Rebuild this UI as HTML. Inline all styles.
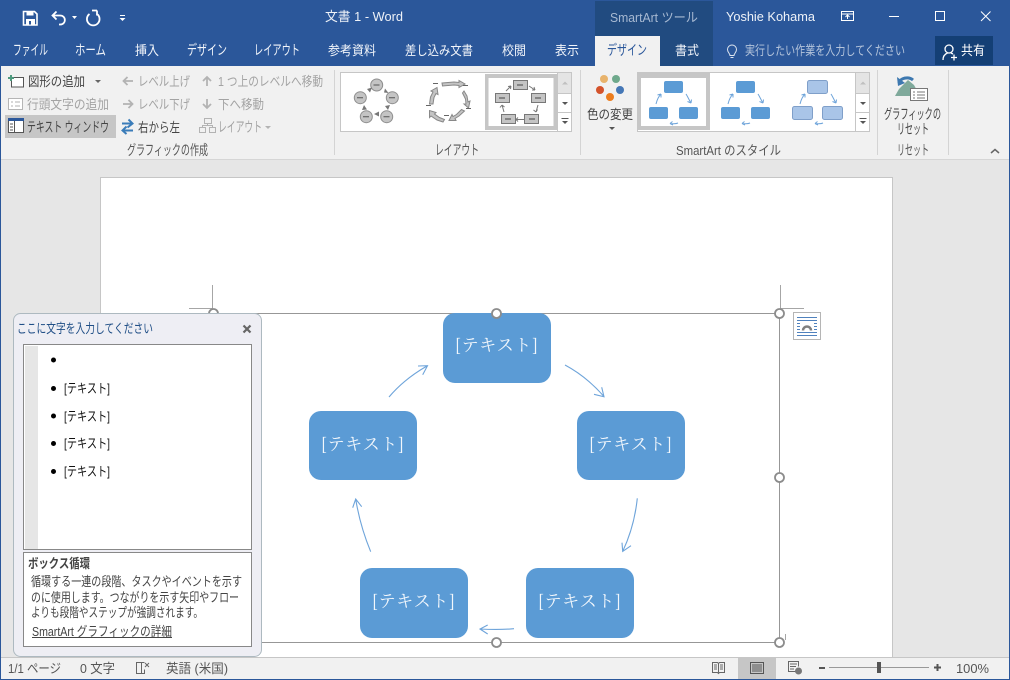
<!DOCTYPE html>
<html lang="ja">
<head>
<meta charset="utf-8">
<title>文書 1 - Word</title>
<style>
html,body{margin:0;padding:0;background:#f1f1f1;width:1010px;height:680px;overflow:hidden}
svg{display:block}
text{font-family:"Liberation Sans","Noto Sans CJK JP",sans-serif;font-size:13px;fill:#444;white-space:pre}
.k{font-size:14px}
.w{fill:#fff}
.g{fill:#a3a3a3}
.t{fill:#f2f5fa}
.box{font-family:"Noto Serif CJK SC","Liberation Serif",serif;font-size:17px;fill:#f2f7fc}
.ar{fill:none;stroke:#6ea4da;stroke-width:1.1}
</style>
</head>
<body>
<svg width="1010" height="680" viewBox="0 0 1010 680" xmlns="http://www.w3.org/2000/svg">
<!-- backgrounds -->
<rect width="1010" height="680" fill="#2b579a"/>
<rect x="1" y="66" width="1008" height="93" fill="#f1f1f1"/>
<rect x="1" y="159" width="1008" height="1" fill="#d6d6d6"/>
<rect x="1" y="160" width="1008" height="498" fill="#e6e6e6"/>
<!-- tool tab -->
<rect x="595" y="1" width="118" height="65" fill="#214b80"/>
<rect x="595" y="36" width="65" height="30" fill="#f1f1f1"/>
<rect x="935" y="36" width="58" height="29" fill="#143f75"/>
<!-- QAT -->
<path d="M23.500 11.500h11l2.500 2.500v11h-13.500z" fill="none" stroke="#fff" stroke-width="1.600"/>
<rect x="26.500" y="11.500" width="7" height="4" fill="#fff"/>
<rect x="26" y="19" width="9" height="6" fill="#fff"/>
<rect x="29" y="21" width="2" height="3.500" fill="#2b579a"/>
<path d="M53 15.500h7c6.500 0 6.500 9 0 9h-1M56.500 11.500l-4 4 4 4" fill="none" stroke="#fff" stroke-width="1.800"/>
<path d="M72 16h5l-2.500 3z" fill="#fff"/>
<path d="M89.500 14a6.300 6.300 0 1 0 7.500 0M97 10.500v5M97 10.500h-5" fill="none" stroke="#fff" stroke-width="1.800"/>
<rect x="120" y="15" width="5" height="1" fill="#fff"/>
<path d="M119.500 18h6l-3 3z" fill="#fff"/>
<!-- window title -->
<text x="325" y="21" textLength="78" lengthAdjust="spacingAndGlyphs" style="fill:#eef2f8">文書 1 - Word</text>
<text x="610" y="22" textLength="88" lengthAdjust="spacingAndGlyphs" style="fill:#a7b9d2">SmartArt ツール</text>
<text x="726" y="21" textLength="89" lengthAdjust="spacingAndGlyphs" style="fill:#eef2f8">Yoshie Kohama</text>
<!-- window buttons -->
<rect x="841.500" y="11.500" width="12" height="9" fill="none" stroke="#fff"/>
<path d="M842 14h11M847.500 19v-3.500M845.500 17l2-2 2 2" fill="none" stroke="#fff"/>
<rect x="889" y="16" width="10" height="1" fill="#fff"/>
<rect x="935.500" y="11.500" width="9" height="9" fill="none" stroke="#fff" stroke-width="1"/>
<path d="M981 11.500l9.500 9.500M990.500 11.500l-9.500 9.500" stroke="#fff" stroke-width="1" fill="none"/>
<!-- tabs -->
<text x="13" y="55" class="t k" textLength="35" lengthAdjust="spacingAndGlyphs">ファイル</text>
<text x="75" y="55" class="t k" textLength="31" lengthAdjust="spacingAndGlyphs">ホーム</text>
<text x="135" y="55" class="t" textLength="24" lengthAdjust="spacingAndGlyphs">挿入</text>
<text x="187" y="55" class="t k" textLength="40" lengthAdjust="spacingAndGlyphs">デザイン</text>
<text x="254" y="55" class="t k" textLength="46" lengthAdjust="spacingAndGlyphs">レイアウト</text>
<text x="328" y="55" class="t" textLength="48" lengthAdjust="spacingAndGlyphs">参考資料</text>
<text x="405" y="55" class="t" textLength="68" lengthAdjust="spacingAndGlyphs">差し込み文書</text>
<text x="502" y="55" class="t" textLength="24" lengthAdjust="spacingAndGlyphs">校閲</text>
<text x="555" y="55" class="t" textLength="24" lengthAdjust="spacingAndGlyphs">表示</text>
<text x="607" y="55" class="k" textLength="40" lengthAdjust="spacingAndGlyphs" style="fill:#2b579a">デザイン</text>
<text x="675" y="55" class="t" textLength="24" lengthAdjust="spacingAndGlyphs">書式</text>
<text x="745" y="55" textLength="160" lengthAdjust="spacingAndGlyphs" style="fill:#b4c4db">実行したい作業を入力してください</text>
<text x="961" y="55" class="w" textLength="24" lengthAdjust="spacingAndGlyphs">共有</text>
<!-- tell me bulb -->
<path d="M730 55.500c0-2-2.500-3-2.500-6a4.500 4.500 0 0 1 9 0c0 3-2.500 4-2.500 6zM730.500 57.500h3" fill="none" stroke="#dfe6f0" stroke-width="1"/>
<!-- share person -->
<circle cx="949" cy="49" r="4" fill="none" stroke="#fff" stroke-width="1.300"/>
<path d="M943 60c0-4 2-6 4.500-7M951 53l2 1M954 54.500v6M951 57.500h6" fill="none" stroke="#fff" stroke-width="1.300"/>
<!-- group separators -->
<g fill="#d4d4d4">
<rect x="334" y="70" width="1" height="85"/>
<rect x="580" y="70" width="1" height="85"/>
<rect x="877" y="70" width="1" height="85"/>
<rect x="948" y="70" width="1" height="85"/>
</g>
<!-- create group -->
<rect x="5" y="115" width="111" height="23" fill="#c6c6c6"/>
<rect x="11.500" y="77.500" width="12" height="9.500" fill="#fff" stroke="#555"/>
<path d="M8 78h6M11 75v6" stroke="#4e9a7e" stroke-width="2" fill="none"/>
<rect x="8.500" y="98.500" width="14" height="11" fill="#fff" stroke="#b5b5b5"/>
<path d="M11 102h2M11 106h2M15 102h5M15 106h5" stroke="#b0b0b0" fill="none"/>
<rect x="8.500" y="118.500" width="15" height="14" fill="#fff" stroke="#555"/>
<rect x="8" y="118" width="16" height="3" fill="#2b579a"/>
<rect x="14" y="121" width="1" height="12" fill="#555"/>
<path d="M10 124h3M10 127h3M10 130h3" stroke="#555" fill="none"/>
<text x="28" y="86" textLength="57" lengthAdjust="spacingAndGlyphs">図形の追加</text>
<path d="M95 80h6l-3 3z" fill="#666"/>
<text x="27" y="109" class="g" textLength="82" lengthAdjust="spacingAndGlyphs">行頭文字の追加</text>
<text x="27" y="132" class="k" textLength="82" lengthAdjust="spacingAndGlyphs">テキスト ウィンドウ</text>
<path d="M133 81h-9M127.500 77l-4 4 4 4" fill="none" stroke="#b3b3b3" stroke-width="1.800"/>
<path d="M123 104h9M128.500 100l4 4-4 4" fill="none" stroke="#b3b3b3" stroke-width="1.800"/>
<text x="138" y="86" class="g" textLength="52" lengthAdjust="spacingAndGlyphs">レベル上げ</text>
<text x="138" y="109" class="g" textLength="52" lengthAdjust="spacingAndGlyphs">レベル下げ</text>
<path d="M122 123.500h10M128.500 119.500l4 4-5 4M133 130.500h-10M126.500 126.500l-4 4 4 3.500" fill="none" stroke="#3a7cb9" stroke-width="2"/>
<text x="138" y="132" textLength="42" lengthAdjust="spacingAndGlyphs">右から左</text>
<path d="M207 86v-9M203 81l4-4 4 4" fill="none" stroke="#b3b3b3" stroke-width="1.800"/>
<path d="M207 99v9M203 104l4 4 4-4" fill="none" stroke="#b3b3b3" stroke-width="1.800"/>
<text x="218" y="86" class="g" textLength="105" lengthAdjust="spacingAndGlyphs">1 つ上のレベルへ移動</text>
<text x="218" y="109" class="g" textLength="46" lengthAdjust="spacingAndGlyphs">下へ移動</text>
<rect x="204.500" y="118.500" width="7" height="5" fill="none" stroke="#b3b3b3"/>
<rect x="199.500" y="127.500" width="6" height="5" fill="none" stroke="#b3b3b3"/>
<rect x="209.500" y="127.500" width="6" height="5" fill="none" stroke="#b3b3b3"/>
<path d="M207.500 124v1.500h-5v2M207.500 125.500h5v2" fill="none" stroke="#b3b3b3"/>
<text x="218" y="132" class="g k" textLength="44" lengthAdjust="spacingAndGlyphs">レイアウト</text>
<path d="M265 126h6l-3 3z" fill="#b3b3b3"/>
<text x="127" y="155" class="k" textLength="81" lengthAdjust="spacingAndGlyphs" style="fill:#555">グラフィックの作成</text>
<!-- layout gallery -->
<rect x="340.500" y="72.500" width="217" height="59" fill="#fff" stroke="#c6c6c6"/>
<g fill="#c4c4c4" stroke="#8e8e8e">
<circle cx="376.700" cy="85" r="6"/><circle cx="392.300" cy="97.700" r="6"/><circle cx="386.700" cy="116.700" r="6"/><circle cx="366.300" cy="116.700" r="6"/><circle cx="360.300" cy="97.700" r="6"/>
</g>
<path d="M373.500 85h6M389 97.700h6M383.500 116.700h6M363 116.700h6M357 97.700h6" stroke="#555" fill="none"/>
<g fill="#777">
<path d="M367 89l5-1.500-2 5zM385 88.500l3.500 4.500-4.500-.5zM390 105l-2 5-3-4zM374 114l5-2.500v5zM364 105l3 4.500-5 .5z"/>
</g>
<g fill="#c4c4c4" stroke="#888" stroke-width="1">
<path d="M442 83l12-1 5 .5v-2l6 3.500-6 3.500v-2l-5-.5-11.500 1z"/>
<path d="M464 91l3 5 1 6 2-1-1.500 7-4.500-4 2 0-.5-5-3-6z"/>
<path d="M464.500 111l-5.500 5-4 2.500 1 2-7 0 3-6 1 2 3.500-2 5-5z"/>
<path d="M443 122l-6-2-6-4-1.500 1.500 0-7 6.500 2-1.500 1.500 5 3.500 5 2z"/>
<path d="M429.500 104l1-7 2.500-5-2-1 6-3.500 1 7-2-1-2 4-1 6.500z"/>
</g>
<path d="M433 83.500h5M463 85.500h5M466 108.500h5M444 115.500h5M426 105.500h5" stroke="#666" fill="none"/>
<rect x="485" y="74" width="73" height="56" fill="#c6c6c6"/>
<rect x="488.500" y="78" width="65" height="48" fill="#fff"/>
<g fill="#c4c4c4" stroke="#777">
<rect x="513.500" y="80.500" width="14" height="9"/><rect x="531.500" y="93.500" width="14" height="9"/><rect x="524.500" y="114.500" width="14" height="9"/><rect x="501.500" y="114.500" width="14" height="9"/><rect x="495.500" y="93.500" width="14" height="9"/>
</g>
<path d="M517 85h6M535 98h6M529 119h6M505 119h6M499 98h6" stroke="#444" fill="none"/>
<path d="M506 91l5-5M529 86l6 4M538 105l-2 7M524 119.500h-8M504 112l-2-7M511 86l-3 .5M511 86l-.5 3M535 90l-3 0M535 90l-1-3M536 112l-2.500-2M536 112l1.500-2.500M516 119.500l2-2M516 119.500l2 2M502 105l-2 2.500M502 105l2.500 2" stroke="#777" fill="none"/>
<!-- layout scroll -->
<rect x="557.500" y="72.500" width="14" height="59" fill="#fff" stroke="#c6c6c6"/>
<rect x="558" y="73" width="13" height="20" fill="#e4e4e4"/>
<path d="M558 93.500h13M558 112.500h13" stroke="#c6c6c6"/>
<path d="M562 84.500h6l-3-3z" fill="#c0c0c0"/>
<path d="M562 102h6l-3 3z" fill="#555"/>
<path d="M561.500 118.500h7" stroke="#555"/><path d="M562 121h6l-3 3z" fill="#555"/>
<text x="435" y="155" class="k" textLength="44" lengthAdjust="spacingAndGlyphs" style="fill:#555">レイアウト</text>
<!-- colors -->
<circle cx="604" cy="79" r="4" fill="#e8b36c"/>
<circle cx="616" cy="79" r="4" fill="#6fa98c"/>
<circle cx="600" cy="90" r="4" fill="#d4532c"/>
<circle cx="620" cy="90" r="4" fill="#4577b6"/>
<circle cx="610" cy="97" r="4" fill="#ec7d1e"/>
<text x="587" y="119" textLength="46" lengthAdjust="spacingAndGlyphs">色の変更</text>
<path d="M609 127h6l-3 3z" fill="#555"/>
<!-- style gallery -->
<rect x="637.500" y="72.500" width="218" height="59" fill="#fff" stroke="#c6c6c6"/>
<rect x="637" y="73" width="73" height="57" fill="#c6c6c6"/>
<rect x="641" y="78" width="65" height="48" fill="#fff"/>
<g fill="#5b9bd5">
<rect x="664" y="81" width="19" height="12" rx="2"/><rect x="649" y="107" width="19" height="12" rx="2"/><rect x="679" y="107" width="19" height="12" rx="2"/>
<rect x="736" y="81" width="19" height="12" rx="2"/><rect x="721" y="107" width="19" height="12" rx="2"/><rect x="751" y="107" width="19" height="12" rx="2"/>
</g>
<g fill="#a9c5e8" stroke="#7f9fc9">
<rect x="807.500" y="80.500" width="20" height="13" rx="2"/><rect x="792.500" y="106.500" width="20" height="13" rx="2"/><rect x="822.500" y="106.500" width="20" height="13" rx="2"/>
</g>
<g fill="none" stroke="#6ea4da" stroke-width="1">
<path d="M656 104c1-4 2-7 5-10M661 94l-3.500 1M661 94l0 3.500"/>
<path d="M686 94c2 3 3 6 5 9M691 103l-3.500-1.500M691 103l.5-3.500"/>
<path d="M678 123c-2 1-4 1-8 .5M670 123.500l2.500-2M670 123.500l3 1.500"/>
<path d="M728 104c1-4 2-7 5-10M733 94l-3.500 1M733 94l0 3.500"/>
<path d="M758 94c2 3 3 6 5 9M763 103l-3.500-1.500M763 103l.5-3.500"/>
<path d="M750 123c-2 1-4 1-8 .5M742 123.500l2.500-2M742 123.500l3 1.500"/>
<path d="M800 104c1-4 2-7 5-10M805 94l-3.500 1M805 94l0 3.500"/>
<path d="M831 94c2 3 3 6 5 9M836 103l-3.500-1.500M836 103l.5-3.500"/>
<path d="M823 123c-2 1-4 1-8 .5M815 123.500l2.500-2M815 123.500l3 1.500"/>
</g>
<rect x="855.500" y="72.500" width="14" height="59" fill="#fff" stroke="#c6c6c6"/>
<rect x="856" y="73" width="13" height="20" fill="#e4e4e4"/>
<path d="M856 93.500h13M856 112.500h13" stroke="#c6c6c6"/>
<path d="M860 84.500h6l-3-3z" fill="#c0c0c0"/>
<path d="M860 102h6l-3 3z" fill="#555"/>
<path d="M859.500 118.500h7" stroke="#555"/><path d="M860 121h6l-3 3z" fill="#555"/>
<text x="676" y="155" textLength="105" lengthAdjust="spacingAndGlyphs" style="fill:#555">SmartArt のスタイル</text>
<!-- reset -->
<path d="M908 80l6 5 6 11h-25l4-7z" fill="#7fa99b"/>
<rect x="910.500" y="88.500" width="17" height="12" fill="#fff" stroke="#777"/>
<path d="M913 92h2M917 92h8M913 95h2M917 95h8M913 98h2M917 98h8" stroke="#777" fill="none"/>
<path d="M899 83a8 6 0 0 1 14-3" fill="none" stroke="#3d78b0" stroke-width="3"/>
<path d="M897 77l1 9 7-3z" fill="#3d78b0"/>
<text x="884" y="119" class="k" textLength="57" lengthAdjust="spacingAndGlyphs">グラフィックの</text>
<text x="897" y="134" class="k" textLength="32" lengthAdjust="spacingAndGlyphs">リセット</text>
<text x="897" y="155" class="k" textLength="32" lengthAdjust="spacingAndGlyphs" style="fill:#555">リセット</text>
<path d="M991 153l4-3.500 4 3.500" fill="none" stroke="#666" stroke-width="1.500"/>
<!-- page -->
<rect x="100.500" y="177.500" width="792" height="482" fill="#fff" stroke="#c6c6c6"/>
<rect x="1" y="657" width="1008" height="1" fill="#c6c6c6"/>
<rect x="1" y="658" width="1008" height="21" fill="#f1f1f1"/>
<!-- smartart frame -->
<path d="M213 313.500h566.500M779.500 313v329.500M213 642.500h566.500" fill="none" stroke="#979797" stroke-width="1"/>
<path d="M212.500 285v28M189 308.500h24M780.500 285v28M780 308.500h24M785.500 634v6" stroke="#a6a6a6" fill="none"/>
<rect x="443" y="313" width="108" height="70" rx="12" fill="#5b9bd5"/>
<rect x="309" y="411" width="108" height="69" rx="12" fill="#5b9bd5"/>
<rect x="577" y="411" width="108" height="69" rx="12" fill="#5b9bd5"/>
<rect x="360" y="568" width="108" height="70" rx="12" fill="#5b9bd5"/>
<rect x="526" y="568" width="108" height="70" rx="12" fill="#5b9bd5"/>
<text x="455" y="351" class="box" textLength="83" lengthAdjust="spacing">[テキスト]</text>
<text x="321" y="450" class="box" textLength="83" lengthAdjust="spacing">[テキスト]</text>
<text x="589" y="450" class="box" textLength="83" lengthAdjust="spacing">[テキスト]</text>
<text x="372" y="607" class="box" textLength="83" lengthAdjust="spacing">[テキスト]</text>
<text x="538" y="607" class="box" textLength="83" lengthAdjust="spacing">[テキスト]</text>
<!-- arrows -->
<path class="ar" d="M389 397c11-13 24-23 38-31M418 366l9.500-.3-4.800 9"/>
<path class="ar" d="M565 365c15 8 28 19 39 31.500M594 394.300l10 2.500-2.300-9.500"/>
<path class="ar" d="M637.300 498.300c-2 19-7 37-14.600 53M622 542.700l.7 8.700 8.300-5.700"/>
<path class="ar" d="M514 628.700c-11 1-22 1-34 .3M487.700 625l-7.700 4 7.700 5"/>
<path class="ar" d="M370.700 551.700c-7-17-12-34-15-52.700M352.700 507.700l3-8.700 6 7.700"/>
<!-- handles -->
<g fill="#fff" stroke="#8c8c8c" stroke-width="1.800">
<circle cx="496.500" cy="313.500" r="4.500"/>
<circle cx="779.500" cy="313.500" r="4.500"/>
<circle cx="779.500" cy="477.500" r="4.500"/>
<circle cx="779.500" cy="642.500" r="4.500"/>
<circle cx="496.500" cy="642.500" r="4.500"/>
<circle cx="213.500" cy="313.500" r="4.500"/>
</g>
<!-- layout options button -->
<rect x="793.500" y="312.500" width="27" height="27" fill="#fff" stroke="#b5b5b5"/>
<path d="M797 317.500h20M797 320.500h20M797 323.500h3M814 323.500h3M797 326.500h3M814 326.500h3M797 329.500h3M814 329.500h3M797 332.500h20M797 335.500h20" stroke="#4f81bd" fill="none"/>
<path d="M803 330.500a4 4 0 0 1 8 0" fill="none" stroke="#808080" stroke-width="2.500"/>
<!-- text pane -->
<rect x="13.500" y="313.500" width="248" height="343" rx="7" fill="#eeeef4" stroke="#adb9c0"/>
<text x="17" y="333" textLength="136" lengthAdjust="spacingAndGlyphs" style="fill:#1f4e86">ここに文字を入力してください</text>
<path d="M243.500 325.500l7 7M250.500 325.500l-7 7" stroke="#666" stroke-width="2.200" fill="none"/>
<rect x="23.500" y="344.500" width="228" height="205" fill="#fff" stroke="#888"/>
<rect x="25" y="346" width="13" height="203" fill="#e6e6e6"/>
<g fill="#000">
<circle cx="53.500" cy="360" r="2.500"/><circle cx="53.500" cy="388.500" r="2.500"/><circle cx="53.500" cy="416" r="2.500"/><circle cx="53.500" cy="443.500" r="2.500"/><circle cx="53.500" cy="471.500" r="2.500"/>
</g>
<text x="64" y="393" textLength="46" lengthAdjust="spacingAndGlyphs" style="fill:#111">[テキスト]</text>
<text x="64" y="421" textLength="46" lengthAdjust="spacingAndGlyphs" style="fill:#111">[テキスト]</text>
<text x="64" y="448" textLength="46" lengthAdjust="spacingAndGlyphs" style="fill:#111">[テキスト]</text>
<text x="64" y="476" textLength="46" lengthAdjust="spacingAndGlyphs" style="fill:#111">[テキスト]</text>
<rect x="23.500" y="552.500" width="228" height="94" fill="#fff" stroke="#888"/>
<text x="28" y="568" textLength="62" lengthAdjust="spacingAndGlyphs" style="font-weight:700;fill:#444">ボックス循環</text>
<text x="31" y="586" textLength="211" lengthAdjust="spacingAndGlyphs">循環する一連の段階、タスクやイベントを示す</text>
<text x="31" y="602" textLength="208" lengthAdjust="spacingAndGlyphs">のに使用します。つながりを示す矢印やフロー</text>
<text x="31" y="617" textLength="172" lengthAdjust="spacingAndGlyphs">よりも段階やステップが強調されます。</text>
<text x="32" y="636" textLength="140" lengthAdjust="spacingAndGlyphs">SmartArt グラフィックの詳細</text>
<rect x="32" y="637" width="140" height="1" fill="#444"/>
<!-- status -->
<rect x="738" y="658" width="38" height="21" fill="#c6c6c6"/>
<text x="8" y="673" textLength="53" lengthAdjust="spacingAndGlyphs" style="fill:#555">1/1 ページ</text>
<text x="80" y="673" textLength="35" lengthAdjust="spacingAndGlyphs" style="fill:#555">0 文字</text>
<path d="M136.500 662.500h5v11h-5zM141.500 662.500h3M141.500 673.500h3v-4" fill="none" stroke="#666"/>
<path d="M145 663l4 4M149 663l-4 4" stroke="#666" fill="none"/>
<text x="166" y="673" textLength="62" lengthAdjust="spacingAndGlyphs" style="fill:#555">英語 (米国)</text>
<path d="M712.500 662.500h5l1 1 1-1h5v10h-5l-1 1-1-1h-5zM718.500 663.500v9M714 665h3M714 667h3M714 669h3M720 665h3M720 667h3M720 669h3" fill="none" stroke="#666"/>
<rect x="750.500" y="662.500" width="13" height="11" fill="none" stroke="#555"/>
<path d="M752 665h10M752 667h10M752 669h10M752 671h10" stroke="#555" fill="none"/>
<path d="M798 671.500h-9.500v-10h10v5M790 664h7M790 666.500h6M790 669h4" fill="none" stroke="#666"/>
<circle cx="798.500" cy="671" r="3.500" fill="#777"/>
<rect x="819" y="667" width="6" height="2" fill="#555"/>
<rect x="829" y="667" width="100" height="1" fill="#999"/>
<rect x="877" y="662" width="4" height="11" fill="#555"/>
<path d="M934 667.500h7M937.500 664v7" stroke="#555" stroke-width="2" fill="none"/>
<text x="956" y="673" textLength="33" lengthAdjust="spacingAndGlyphs" style="fill:#555">100%</text>
<!-- window edge -->
<path d="M.5 66v613.500h1009V66" fill="none" stroke="#2b579a"/>
</svg>
</body>
</html>
